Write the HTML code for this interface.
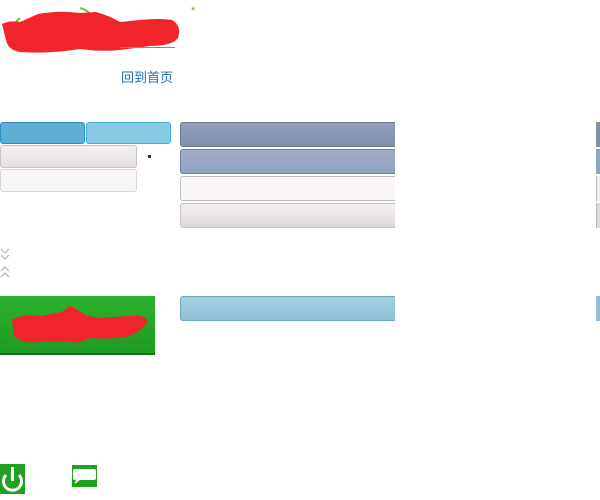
<!DOCTYPE html>
<html><head><meta charset="utf-8"><style>
body{margin:0;width:600px;height:500px;background:#fff;position:relative;overflow:hidden;font-family:"Liberation Sans","Noto Sans CJK SC",sans-serif}
.a{position:absolute;box-sizing:border-box}
.r{border-radius:3px}
</style></head><body>
<svg class="a" style="left:0;top:0" width="200" height="60">
<path d="M12 26 L20 18 M80 8 Q88 10 92 16" stroke="#6c3" stroke-width="2" fill="none"/>
<path d="M2 24 Q10 20 20 22 L38 14 Q60 10 80 13 L96 12 Q110 16 120 22 L140 20 Q160 18 172 20 Q182 26 178 38 Q172 46 150 46 L120 50 Q100 52 80 49 Q50 54 20 52 Q8 50 6 40 Z" fill="#f0242a"/>
<text x="191" y="14" fill="#6a2" font-size="11">*</text>
<rect x="120" y="47" width="55" height="1" fill="#889"/>
</svg>
<div class="a" style="left:121px;top:67px;font-size:13px;color:#1a6fb5">回到首页</div>
<div class="a r" style="left:0;top:122px;width:85px;height:22px;background:#5eaed6;border:1px solid #2c8fc3"></div>
<div class="a r" style="left:86px;top:122px;width:85px;height:22px;background:#86cbe3;border:1px solid #3bb0d8"></div>
<div class="a r" style="left:0;top:145px;width:137px;height:23px;background:linear-gradient(#f6f0f4,#e4dde2);border:1px solid #cdbfcb"></div>
<div class="a r" style="left:0;top:169px;width:137px;height:23px;background:#f8f6f8;border:1px solid #d7d7d7"></div>
<div class="a" style="left:148px;top:155px;width:3px;height:3px;background:#333"></div>
<div class="a r" style="left:180px;top:122px;width:240px;height:25px;background:linear-gradient(#93a0b6,#7f90ad);border:1px solid #6c7a90"></div>
<div class="a r" style="left:180px;top:149px;width:240px;height:25px;background:linear-gradient(#a3acc8,#8fa3c3);border:1px solid #6d7f99"></div>
<div class="a r" style="left:180px;top:176px;width:240px;height:25px;background:#faf6fa;border:1px solid #bbb"></div>
<div class="a r" style="left:180px;top:203px;width:240px;height:25px;background:linear-gradient(#f4f0f2,#dedad9);border:1px solid #c4c4c4"></div>
<div class="a r" style="left:180px;top:296px;width:240px;height:25px;background:linear-gradient(#a8cde0,#8fc0d6);border:1px solid #6aa7bf"></div>
<div class="a" style="left:395px;top:110px;width:200px;height:220px;background:#fff"></div>
<div class="a" style="left:596px;top:122px;width:4px;height:25px;background:#7f90ad"></div>
<div class="a" style="left:596px;top:149px;width:4px;height:25px;background:#8fa3c3"></div>
<div class="a" style="left:596px;top:176px;width:4px;height:25px;background:#eee;border-left:1px solid #bbb"></div>
<div class="a" style="left:596px;top:203px;width:4px;height:25px;background:#ddd;border-left:1px solid #bbb"></div>
<div class="a" style="left:596px;top:296px;width:4px;height:25px;background:#8fc0d6"></div>
<svg class="a" style="left:0;top:247px" width="12" height="34">
<path d="M1 2 L5 6 L9 2 M1 8 L5 12 L9 8 M1 24 L5 20 L9 24 M1 30 L5 26 L9 30" stroke="#bbb" stroke-width="1.3" fill="none"/>
</svg>
<div class="a" style="left:0;top:296px;width:155px;height:59px;background:linear-gradient(#2db32d,#1e9a22);border-bottom:2px solid #0d6f12"></div>
<svg class="a" style="left:0;top:296px" width="155" height="59">
<path d="M12 24 Q20 18 40 20 L62 16 L70 10 L78 14 Q84 20 100 22 L130 20 Q146 18 148 26 Q142 34 130 40 Q110 44 90 42 Q80 48 70 46 L40 46 Q22 48 14 40 Z" fill="#f0242a"/>
</svg>
<svg class="a" style="left:0;top:464px" width="25" height="30">
<rect width="25" height="30" fill="#22a022"/>
<path d="M6 11 A9 9 0 1 0 19 11" stroke="#fff" stroke-width="3" fill="none"/>
<path d="M12.5 3 V17" stroke="#fff" stroke-width="3"/>
</svg>
<svg class="a" style="left:72px;top:465px" width="25" height="22">
<rect width="25" height="22" fill="#22a022"/>
<rect x="1" y="4" width="23" height="11" rx="2" fill="#fff"/>
<path d="M4 14 L3 19 L9 14 Z" fill="#fff"/>
</svg>
</body></html>
